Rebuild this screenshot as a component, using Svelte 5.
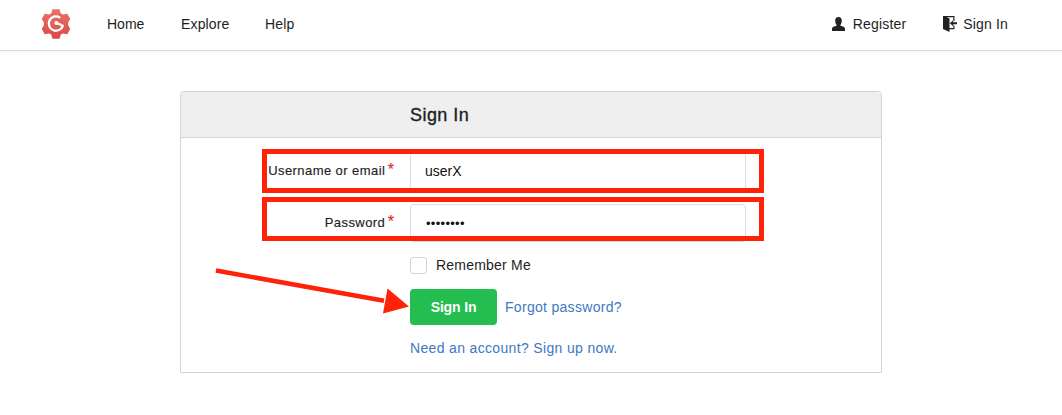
<script>
  let username = $state('userX');
  let password = $state('password');
  let remember = $state(false);
</script>

<div class="page">
  <nav>
    <a class="logo" href="#home" aria-label="Home">
      <svg width="30" height="32" viewBox="0 0 30 32">
        <defs>
          <linearGradient id="gear" x1="0" y1="0" x2="0" y2="1">
            <stop offset="0" stop-color="#e8736c" />
            <stop offset="1" stop-color="#da4b44" />
          </linearGradient>
        </defs>
        <path d="M11.500 1.200h7l1.200 4 2.300 1.300 4.300-.8 3 5.400-2.100 3.100v3.400l2.100 3.200-3 5.400-4.300-.8-2.300 1.300-1.200 4.100h-7l-1.200-4.100L8 25.400l-4.300.8-3-5.400 2.100-3.200v-3.400L.7 11.100l3-5.400 4.300.8 2.300-1.300z" fill="url(#gear)" />
        <path d="M18.400 9.200A7.200 7.200 0 1 0 21.800 17.800L15.300 14.800" fill="none" stroke="#fff" stroke-width="2.300" stroke-linecap="round" stroke-linejoin="round" />
        <circle cx="15.300" cy="15" r="1.900" fill="#fff" />
      </svg>
    </a>
    <a class="home" href="#home">Home</a>
    <a class="explore" href="#explore">Explore</a>
    <a class="help" href="#help">Help</a>
    <a class="register" href="#register">
      <svg width="13" height="14" viewBox="0 0 13 14"><path d="M6.500 0C4.200 0 3.200 1.500 3.200 3.600c0 2 .5 3.300 1.300 4.200v.9L1.400 9.800C.3 10.200 0 11.200 0 12.300V14h13v-1.700c0-1.100-.3-2.100-1.400-2.500L8.500 8.700v-.9c.8-.9 1.300-2.200 1.300-4.200C9.800 1.500 8.800 0 6.500 0z" fill="#222" /></svg>
      Register
    </a>
    <a class="signin" href="#signin">
      <svg width="14" height="16" viewBox="0 0 14 16"><path d="M0 0h11.500v5h-1.200V1.200H3.500l3 1.300V12h3.800V9.500h1.200v3.700h-5V16L0 13z" fill="#222" /><path d="M6.800 7.300l3.400-3v2H14v2h-3.800v2z" fill="#222" /></svg>
      Sign In
    </a>
  </nav>

  <main>
    <h1>Sign In</h1>
    <form onsubmit={(e) => e.preventDefault()}>
      <div class="field">
        <label for="user">Username or email<span>*</span></label>
        <input id="user" bind:value={username} />
        <div class="highlight"></div>
      </div>
      <div class="field second">
        <label for="pass">Password<span>*</span></label>
        <input id="pass" type="password" bind:value={password} />
        <div class="highlight lower"></div>
      </div>
      <label class="remember"><input type="checkbox" bind:checked={remember} /><span>Remember Me</span></label>
      <div class="actions">
        <button>Sign In</button>
        <a href="#forgot">Forgot password?</a>
        <svg class="arrow" width="196" height="54" viewBox="0 0 196 54">
          <path d="M1 4.500 169 34.800" stroke="#ff2108" stroke-width="4.600" />
          <path d="M172.500 22.500 194 40.500 168 47.500z" fill="#ff2108" />
        </svg>
      </div>
      <a class="signup" href="#signup">Need an account? Sign up now.</a>
    </form>
  </main>
</div>

<style>
  :global(body) { margin: 0; background: #fff; }
  * { box-sizing: border-box; }
  .page { height: 415px; overflow: hidden; font-family: "Liberation Sans", Arial, sans-serif; font-size: 14px; line-height: 20px; color: #1e1e1e; }
  a { text-decoration: none; color: #4078c0; }
  nav { height: 51px; padding: 0 54px 3px 41px; display: flex; align-items: center; border-bottom: 1px solid #dadada; box-shadow: 0 1px 4px rgba(0, 0, 0, .06); }
  nav a { color: #1e1e1e; white-space: nowrap; letter-spacing: .15px; }
  .logo { width: 30px; height: 32px; margin-right: 36px; }
  .logo svg { display: block; }
  .home { width: 74px; letter-spacing: 0; }
  .explore { width: 84px; }
  .register, .signin { display: flex; align-items: center; }
  .register { margin-left: auto; gap: 8px; letter-spacing: .18px; }
  .signin { margin-left: 37px; gap: 6px; }
  main { width: 702px; height: 282px; margin: 40px 0 0 180px; border: 1px solid #d4d4d5; border-radius: 4px 4px 0 0; }
  h1 { height: 46px; margin: 0; padding-left: 229px; background: #efefef; border-bottom: 1px solid #d4d4d5; border-radius: 3px 3px 0 0; font-size: 18px; line-height: 46px; font-weight: 400; letter-spacing: .45px; -webkit-text-stroke: .35px; }
  form { padding: 14px 0 0 229px; }
  .field { position: relative; display: flex; align-items: center; width: 336px; height: 38px; }
  .second { margin-top: 14px; }
  .field label { width: 180px; margin-left: -196px; margin-right: 16px; flex: none; text-align: right; font-size: 13px; letter-spacing: .43px; white-space: nowrap; -webkit-text-stroke: .15px; }
  .field label span { color: #db2828; font-size: 16px; margin-left: 2.500px; letter-spacing: 0; line-height: 1; }
  .field input { width: 336px; height: 38px; padding: 0 14px; border: 1px solid #dcddde; border-radius: 4px; outline: 0; background: #fff; font: inherit; color: #111; }
  .field #pass { font-size: 13px; letter-spacing: .3px; padding-left: 15px; }
  .highlight { position: absolute; left: -148px; top: -3px; width: 502px; height: 44px; border: 5px solid #ff2108; pointer-events: none; }
  .lower { top: -7px; }
  .remember { display: flex; align-items: center; gap: 9px; width: max-content; height: 17px; margin-top: 15px; letter-spacing: .22px; }
  .remember span { margin-top: -2px; }
  .remember input { appearance: none; width: 17px; height: 17px; margin: 0; border: 1px solid #d4d4d5; border-radius: 3px; background: #fff; }
  .actions { position: relative; display: flex; align-items: center; gap: 8px; margin-top: 15px; letter-spacing: .3px; }
  button { width: 87px; height: 36px; border: 0; border-radius: 4px; padding: 0; background: #23bd50; color: #fff; font: bold 14px "Liberation Sans", Arial, sans-serif; letter-spacing: -.15px; }
  .arrow { position: absolute; left: -195px; top: -23px; pointer-events: none; }
  .signup { display: block; width: max-content; margin-top: 13px; letter-spacing: .34px; }
</style>
